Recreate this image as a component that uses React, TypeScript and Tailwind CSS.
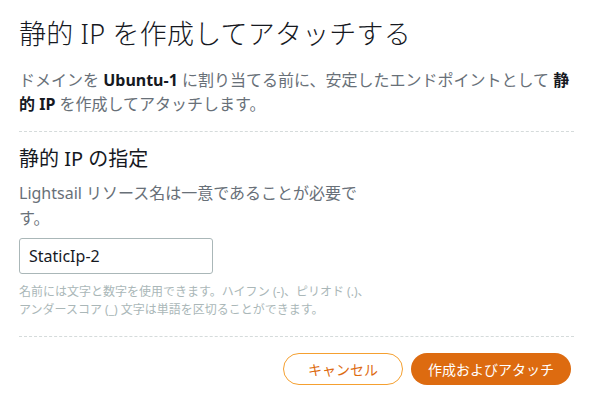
export default function App() {
  return (
    <main
      className="min-h-screen w-[593px] bg-white px-[19px] pt-[16px] text-[#16191f]"
      style={{ fontFamily: '"Noto Sans", "Noto Sans CJK JP", sans-serif' }}
    >
      {/* Header */}
      <h1 className="text-[27px] font-light leading-[36px] tracking-[0.2px]">
        静的 IP を作成してアタッチする
      </h1>
      <p className="mt-[16px] text-[16px] leading-[24px] text-[#687078]">
        ドメインを <b className="font-bold text-[#16191f]">Ubuntu-1</b>{" "}
        に割り当てる前に、安定したエンドポイントとして{" "}
        <b className="font-bold text-[#16191f]">静的 IP</b>{" "}
        を作成してアタッチします。
      </p>

      <div className="mt-[15px] border-t border-dashed border-[#d5dbdb]" />

      {/* Form field */}
      <section className="mt-[13px]">
        <h2 className="text-[20px] font-normal leading-[28px]">静的 IP の指定</h2>
        <div className="max-w-[360px]">
          <p className="mt-[8px] text-[16px] leading-[25px] text-[#687078]">
            Lightsail リソース名は一意であることが必要です。
          </p>
          <input
            defaultValue="StaticIp-2"
            className="mt-[7px] block h-[36px] w-[194px] rounded-[3px] border border-[#aab7b8] px-[9px] text-[16px] text-[#16191f] outline-none"
          />
          <p className="mt-[9px] text-[12px] leading-[18px] text-[#aab7b8]">
            名前には文字と数字を使用できます。ハイフン (-)、ピリオド (.)、アンダースコア (_) 文字は単語を区切ることができます。
          </p>
        </div>
      </section>

      <div className="mt-[17px] border-t border-dashed border-[#d5dbdb]" />

      {/* Actions */}
      <div className="mt-[16px] flex justify-end gap-[8px] pr-[3px]">
        <button className="flex h-[32px] w-[120px] items-center justify-center rounded-full border border-[#f5a030] bg-white text-[14px] text-[#dd6b10]">
          キャンセル
        </button>
        <button className="flex h-[32px] w-[160px] items-center justify-center rounded-full bg-[#dd6b10] text-[14px] text-white">
          作成およびアタッチ
        </button>
      </div>
    </main>
  );
}
